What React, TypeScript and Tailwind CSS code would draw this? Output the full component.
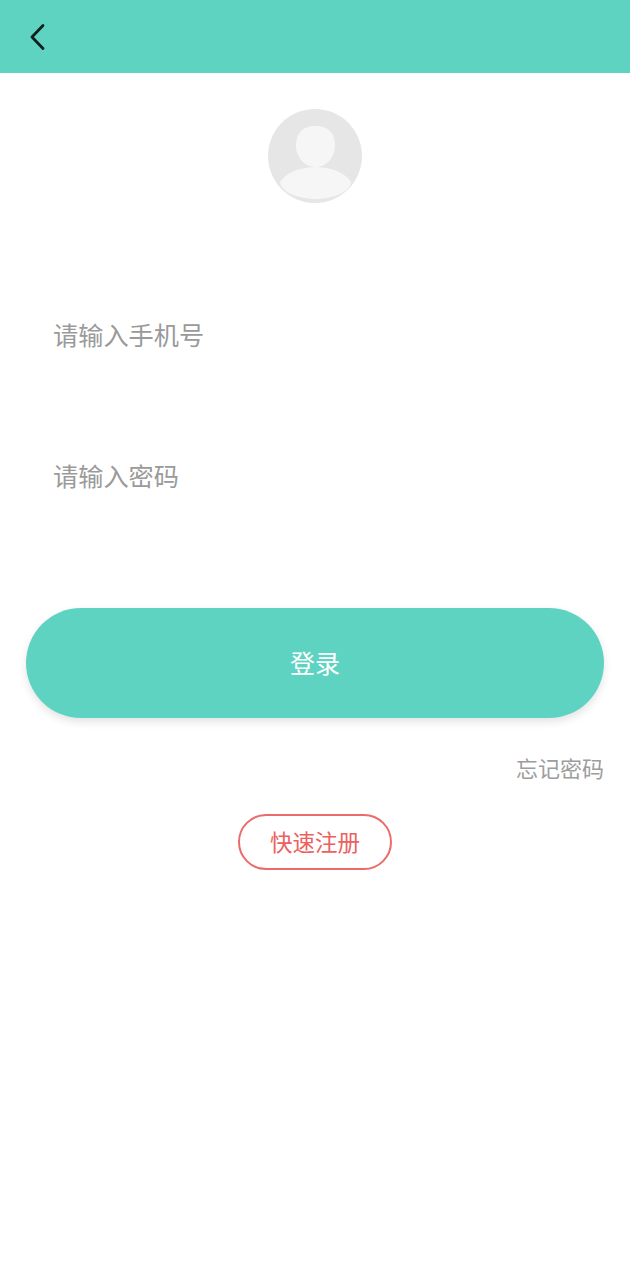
import React from "react";

export default function App() {
  return (
    <div className="w-[630px] h-[1280px] bg-white flex flex-col overflow-hidden font-['Noto_Sans_CJK_SC',sans-serif]">
      <header className="h-[73px] shrink-0 bg-[#5fd3c2] flex items-center pl-[26px]">
        <svg width="22" height="30" viewBox="0 0 22 30" fill="none">
          <path d="M17 3.5 L6 15 L17 26.5" stroke="#10201e" strokeWidth="2.8" strokeLinecap="round" strokeLinejoin="round" />
        </svg>
      </header>

      <div className="flex justify-center pt-[36px]">
        <div className="w-[94px] h-[94px] rounded-full bg-[#e6e6e6] overflow-hidden">
          <svg width="94" height="94" viewBox="0 0 94 94">
            <path d="M47.5 17 C60 17 67 24 67 36 C67 49 58 58 47.5 58 C37 58 28 49 28 36 C28 24 35 17 47.5 17 Z" fill="#f6f6f6" />
            <path d="M12 73 C18 63 34 58 47.5 58 C61 58 77 63 83 73 C82 84 62 90 47.5 90 C33 90 13 84 12 73 Z" fill="#f6f6f6" />
          </svg>
        </div>
      </div>

      <div className="mt-[111px] pl-[53px] h-[40px] flex items-center text-[25.2px] leading-[40px] text-[#9a9a9a]">请输入手机号</div>
      <div className="mt-[101px] pl-[53px] h-[40px] flex items-center text-[25.2px] leading-[40px] text-[#9a9a9a]">请输入密码</div>

      <div className="mt-[113px] px-[26px]">
        <div className="h-[110px] rounded-[55px] bg-[#5fd3c2] shadow-[0_4px_8px_rgba(0,0,0,0.11)] flex items-center justify-center text-[25px] text-white">登录</div>
      </div>

      <div className="mt-[29px] pr-[26px] h-[40px] flex items-center justify-end text-[22px] text-[#9d9d9d]">忘记密码</div>

      <div className="mt-[27px] flex justify-center">
        <div className="w-[154px] h-[56px] rounded-[28px] border-2 border-[#ec6a6a] flex items-center justify-center text-[22.5px] text-[#ec6060]">快速注册</div>
      </div>
    </div>
  );
}
